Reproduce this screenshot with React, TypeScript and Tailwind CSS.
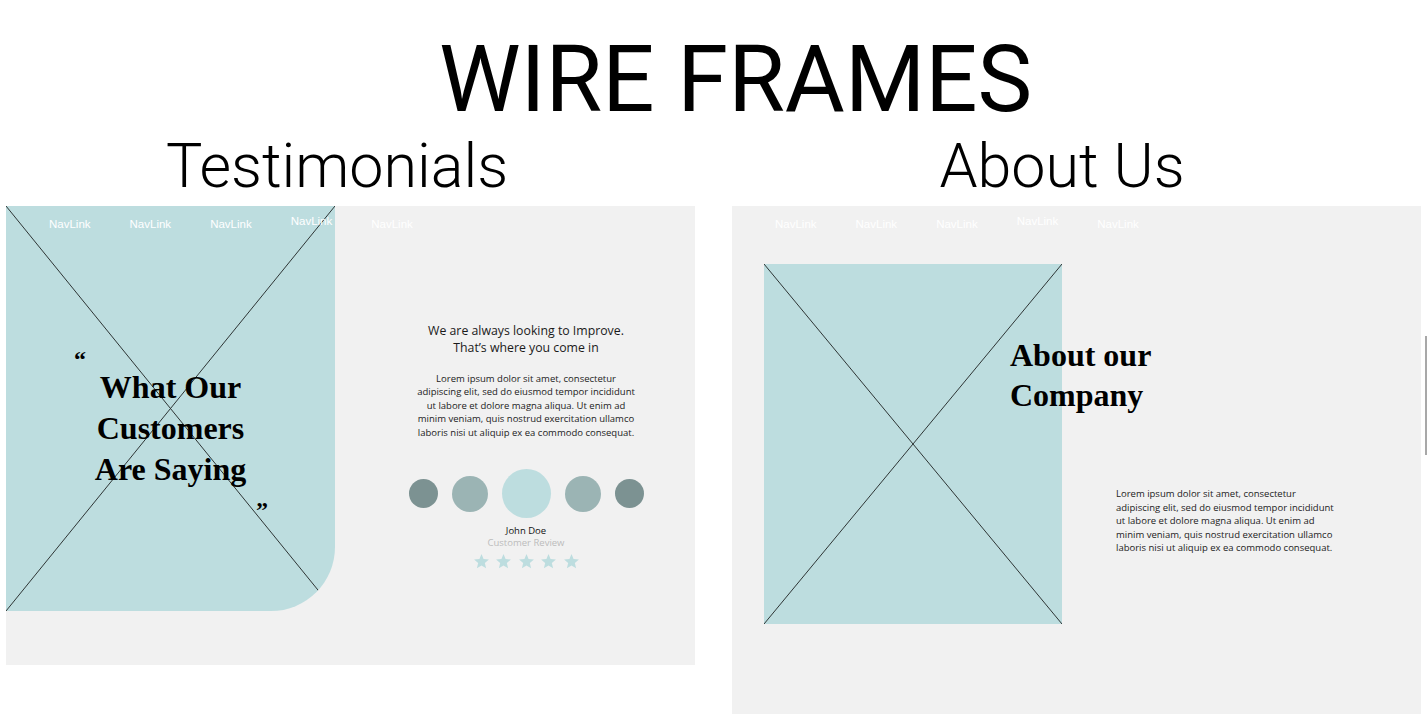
const navLinks = ["NavLink", "NavLink", "NavLink", "NavLink", "NavLink"];

function Cross() {
  return (
    <svg
      className="absolute inset-0 h-full w-full"
      viewBox="0 0 100 100"
      preserveAspectRatio="none"
    >
      <line x1="0" y1="0" x2="100" y2="100" stroke="#2e3535" strokeWidth="1" vectorEffect="non-scaling-stroke" />
      <line x1="100" y1="0" x2="0" y2="100" stroke="#2e3535" strokeWidth="1" vectorEffect="non-scaling-stroke" />
    </svg>
  );
}

function Nav() {
  return (
    <nav className="absolute left-[43px] top-[11px] z-10 flex gap-[39px] font-['Liberation_Sans',sans-serif] text-[11.5px] leading-[14px] text-white">
      {navLinks.map((l, i) => (
        <span key={i} className={i === 3 ? "-mt-[3px]" : ""}>
          {l}
        </span>
      ))}
    </nav>
  );
}

function Star() {
  return (
    <svg viewBox="0 0 24 24" className="h-[17px] w-[17px]">
      <polygon
        points="12,1.5 14.9,8.6 22.5,9.2 16.7,14.1 18.5,21.6 12,17.6 5.5,21.6 7.3,14.1 1.5,9.2 9.1,8.6"
        fill="#bddddf"
      />
    </svg>
  );
}

const lorem = [
  "Lorem ipsum dolor sit amet, consectetur",
  "adipiscing elit, sed do eiusmod tempor incididunt",
  "ut labore et dolore magna aliqua. Ut enim ad",
  "minim veniam, quis nostrud exercitation ullamco",
  "laboris nisi ut aliquip ex ea commodo consequat.",
];

function Lorem({ className }: { className: string }) {
  return (
    <p className={className}>
      {lorem.map((l, i) => (
        <span key={i} className="block">
          {l}
        </span>
      ))}
    </p>
  );
}

export default function App() {
  return (
    <div className="h-[716px] w-[1427px] overflow-hidden bg-white font-['Roboto',sans-serif] text-black">
      <h1 className="pl-[44px] pt-[34px] text-center text-[92px] font-normal leading-[92px]">
        WIRE FRAMES
      </h1>

      <div className="mt-[10px] flex items-start pl-[6px]">
        {/* Testimonials */}
        <section className="w-[689px]">
          <h2 className="pr-[27px] text-center text-[61px] font-light leading-[61px]">
            Testimonials
          </h2>
          <div className="relative mt-[9px] flex h-[459px] items-start bg-[#f1f1f1]">
            <Nav />
            <div className="relative h-[405px] w-[329px] shrink-0 overflow-hidden rounded-br-[64px] bg-[#bddddf]">
              <Cross />
              <div className="relative flex flex-col pt-[143px] font-['Liberation_Serif',serif] font-bold">
                <span className="h-[20px] pl-[68px] text-[24px] leading-[20px]">“</span>
                <h3 className="-mt-[2px] text-center text-[32px] leading-[41px]">
                  What Our
                  <br />
                  Customers
                  <br />
                  Are Saying
                </h3>
                <span className="mt-[10px] h-[20px] pl-[250px] text-[24px] leading-[20px]">”</span>
              </div>
            </div>

            <div className="flex flex-1 flex-col items-center pl-[22px] pt-[116px] font-['Open_Sans',sans-serif]">
              <p className="text-center text-[12.3px] leading-[17px] text-[#1a1a1a]">
                We are always looking to Improve.
                <br />
                That’s where you come in
              </p>
              <Lorem className="mt-[16px] text-center text-[9.5px] leading-[13.4px] text-[#222]" />
              <div className="mt-[30px] flex items-center gap-[14px]">
                <div className="h-[29px] w-[29px] rounded-full bg-[#7c9292]" />
                <div className="h-[36px] w-[36px] rounded-full bg-[#9bb4b4]" />
                <div className="h-[49px] w-[49px] rounded-full bg-[#bddddf]" />
                <div className="h-[36px] w-[36px] rounded-full bg-[#9bb4b4]" />
                <div className="h-[29px] w-[29px] rounded-full bg-[#7c9292]" />
              </div>
              <div className="mt-[7px] text-[9.5px] leading-[12px] text-[#111]">John Doe</div>
              <div className="text-[9.5px] leading-[12px] text-[#bcbcbc]">Customer Review</div>
              <div className="mt-[4px] flex gap-[5.5px]">
                <Star />
                <Star />
                <Star />
                <Star />
                <Star />
              </div>
            </div>
          </div>
        </section>

        {/* About Us */}
        <section className="ml-[37px] w-[689px]">
          <h2 className="pr-[29px] text-center text-[61px] font-light leading-[61px]">
            About Us
          </h2>
          <div className="relative mt-[9px] flex h-[508px] items-start bg-[#f1f1f1] pl-[32px] pt-[58px]">
            <Nav />
            <div className="relative h-[360px] w-[298px] shrink-0 bg-[#bddddf]">
              <Cross />
            </div>
            <div className="relative -ml-[52px] flex flex-col">
              <h3 className="mt-[71px] font-['Liberation_Serif',serif] text-[32px] font-bold leading-[40px]">
                About our
                <br />
                Company
              </h3>
              <Lorem className="ml-[106px] mt-[72px] font-['Open_Sans',sans-serif] text-[9.5px] leading-[13.5px] text-[#222]" />
            </div>
          </div>
        </section>

        <div className="ml-[4px] mt-[200px] h-[119px] w-[2px] bg-[#a8a8a8]" />
      </div>
    </div>
  );
}
